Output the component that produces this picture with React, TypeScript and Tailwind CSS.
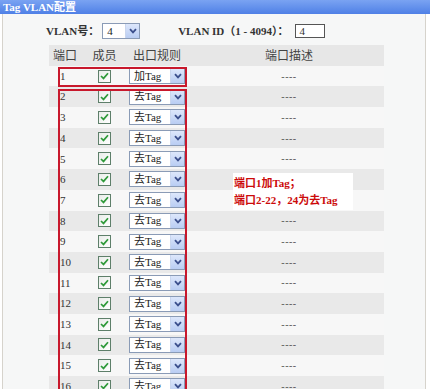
import React from 'react';

const ports = Array.from({ length: 16 }, (_, i) => i + 1);

function Arrow() {
  return (
    <span className="flex h-full w-[14px] items-center justify-center bg-gradient-to-b from-[#dde7fb] to-[#b9cdf3] border-l border-[#c9d6ee]">
      <svg width="8" height="6" viewBox="0 0 8 6">
        <path d="M1 1.2 L4 4.4 L7 1.2" fill="none" stroke="#3b4f8c" strokeWidth="1.8" />
      </svg>
    </span>
  );
}

function Select({ value, width }: { value: string; width: string }) {
  return (
    <div className={`flex h-[16px] ${width} items-center border border-[#8a9bb6] bg-white`}>
      <span className="flex-1 pl-[4px] text-[11px] leading-none text-[#222]">{value}</span>
      <Arrow />
    </div>
  );
}

function Checkbox() {
  return (
    <span className="flex h-[13px] w-[13px] items-center justify-center border border-[#5e7f6a] bg-gradient-to-br from-[#e9ece9] to-white">
      <svg width="9" height="8" viewBox="0 0 9 8">
        <path d="M1 4 L3.5 6.4 L8 1.2" fill="none" stroke="#2f9a3a" strokeWidth="1.7" />
      </svg>
    </span>
  );
}

export default function App() {
  return (
    <div
      className="relative h-[389px] w-[430px] overflow-hidden bg-white text-[#333]"
      style={{ fontFamily: '"Liberation Serif", "Noto Sans CJK SC", serif' }}
    >
      {/* title bar */}
      <div className="flex h-[14px] items-center bg-gradient-to-b from-[#7aa3f2] to-[#4f80e6] pl-[3px] text-[11px] font-bold leading-none text-white">
        Tag VLAN配置
      </div>

      <div className="ml-[2px] h-full w-[424px] border-l border-r border-[#d6d3cc] bg-[#f6f7f7]">
        {/* vlan selector */}
        <div className="flex h-[31px] items-center pt-[3px] text-[11px] font-bold text-[#333]">
          <span className="ml-[43px]">VLAN号：</span>
          <div className="ml-[3px] font-normal">
            <Select value="4" width="w-[38px]" />
          </div>
          <span className="ml-[38px]">VLAN ID（1 - 4094）：</span>
          <span className="ml-[7px] flex h-[14px] w-[30px] items-center border border-[#555] bg-white pl-[3px] text-[11px] font-normal">
            4
          </span>
        </div>

        {/* table */}
        <div className="relative ml-[46px] w-[335px]">
          <div className="grid h-[20.7px] grid-cols-[35px_41px_69px_190px] items-center bg-[#e7e7e7] text-[12px] text-[#444]">
            <span className="pl-[4px]" style={{ fontFamily: '"Noto Sans CJK SC", sans-serif' }}>端口</span>
            <span className="text-center" style={{ fontFamily: '"Noto Sans CJK SC", sans-serif' }}>成员</span>
            <span className="pl-[8px]" style={{ fontFamily: '"Noto Sans CJK SC", sans-serif' }}>出口规则</span>
            <span className="text-center" style={{ fontFamily: '"Noto Sans CJK SC", sans-serif' }}>端口描述</span>
          </div>
          {ports.map((p) => (
            <div
              key={p}
              className={`grid h-[20.7px] grid-cols-[35px_41px_69px_190px] items-center text-[11px] ${
                p % 2 === 0 ? 'bg-[#e9e9e9]' : 'bg-[#f7f7f7]'
              }`}
            >
              <span className="pl-[11px]">{p}</span>
              <span className="flex justify-center">
                <Checkbox />
              </span>
              <span className="pl-[4px]">
                <Select value={p === 1 ? '加Tag' : '去Tag'} width="w-[56px]" />
              </span>
              <span className="text-center text-[10px] tracking-[0.5px] text-[#555]">
                {p === 6 || p === 7 ? '' : '----'}
              </span>
            </div>
          ))}

          {/* highlight boxes */}
          <div className="absolute left-[9px] top-[22px] h-[20px] w-[129px] border-2 border-[#c8182c]" />
          <div className="absolute left-[9px] top-[44px] h-[400px] w-[129px] border-2 border-[#c8182c]" />

          {/* note */}
          <div className="absolute left-[184px] top-[128px] flex h-[37px] w-[120px] flex-col justify-center gap-[6px] bg-white pl-[1px] text-[11px] font-bold leading-none text-[#cc0a0a]">
            <span>端口1加Tag；</span>
            <span>端口2-22，24为去Tag</span>
          </div>
        </div>
      </div>
    </div>
  );
}
